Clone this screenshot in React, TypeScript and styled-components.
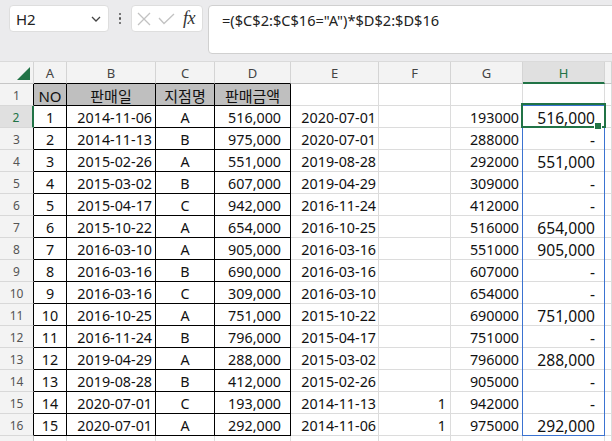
import React from 'react';
import styled, { createGlobalStyle } from 'styled-components';

const Global = createGlobalStyle`
  html, body { margin: 0; padding: 0; background: #ffffff; overflow: hidden; }
  body { font-family: "Noto Sans", "Noto Sans CJK KR", sans-serif; }
  #root { width: 612px; height: 441px; }
`;

const GREEN = '#217346';
const BLUE = '#3b73d1';
const GRID = '#dcdcdc';

const Page = styled.div`
  width: 612px;
  height: 441px;
  overflow: hidden;
  background: #ffffff;
  display: flex;
  flex-direction: column;
`;

const TopBar = styled.div`
  height: 62px;
  flex: 0 0 62px;
  box-sizing: border-box;
  background: #ebebed;
  display: flex;
  align-items: flex-start;
  padding: 5px 0 0 9px;
  border-bottom: 1px solid #dadada;
  & > * {
    flex-shrink: 0;
  }
`;

const NameBox = styled.div`
  width: 100px;
  height: 27px;
  box-sizing: border-box;
  background: #ffffff;
  border: 1px solid #dedede;
  border-radius: 4px;
  display: flex;
  align-items: center;
  justify-content: space-between;
  padding: 0 7px 0 6px;
  font-size: 15px;
  color: #222;
`;

const Dots = styled.div`
  width: 22px;
  height: 27px;
  display: flex;
  flex-direction: column;
  align-items: center;
  justify-content: center;
  gap: 2px;
  & > span {
    width: 2.5px;
    height: 2.5px;
    border-radius: 50%;
    background: #555;
  }
`;

const FxBox = styled.div`
  width: 72px;
  height: 27px;
  box-sizing: border-box;
  background: #ffffff;
  border: 1px solid #dedede;
  border-radius: 4px;
  display: flex;
  align-items: center;
  padding: 0 4px 0 5px;
  gap: 7px;
`;

const Fx = styled.span`
  font-family: "Liberation Serif", serif;
  font-style: italic;
  font-size: 18px;
  color: #333;
  margin-left: 1px;
  letter-spacing: -0.5px;
`;

const FormulaBar = styled.div`
  width: 430px;
  margin-left: 5px;
  height: 49px;
  box-sizing: border-box;
  background: #ffffff;
  border: 1px solid #d0d0d0;
  border-radius: 4px;
  padding: 3px 0 0 13px;
  font-size: 14.6px;
  line-height: 22px;
  color: #222;
  white-space: nowrap;
`;

const SheetArea = styled.div`
  position: relative;
  flex: 1;
  display: grid;
  grid-template-columns: 34px 33px 89px 59px 76px 88px 72px 72px 82px 1fr;
  grid-auto-rows: 22px;
  align-content: start;
`;

const ColHead = styled.div<{ $active?: boolean; $bb?: string }>`
  box-sizing: border-box;
  background: ${(p) => (p.$active ? '#e0e0e0' : '#f3f3f3')};
  border-right: 1px solid #d4d4d4;
  border-bottom: ${(p) => (p.$active ? `2px solid ${GREEN}` : `1px solid ${p.$bb || '#c6c6c6'}`)};
  display: flex;
  align-items: center;
  justify-content: center;
  font-size: 13px;
  color: ${(p) => (p.$active ? GREEN : '#444')};
  padding-top: 1px;
`;

const Corner = styled(ColHead)`
  justify-content: flex-end;
  align-items: flex-end;
  padding: 0 3px 3px 0;
`;

const RowHead = styled.div<{ $active?: boolean; $rb?: string }>`
  box-sizing: border-box;
  background: ${(p) => (p.$active ? '#e0e0e0' : '#f3f3f3')};
  border-bottom: 1px solid #d8d8d8;
  border-right: ${(p) => (p.$active ? `2px solid ${GREEN}` : `1px solid ${p.$rb || '#c6c6c6'}`)};
  display: flex;
  align-items: center;
  justify-content: center;
  font-size: 12px;
  color: ${(p) => (p.$active ? GREEN : '#555')};
  padding-top: 2px;
`;

type Align = 'left' | 'center' | 'right';

const Cell = styled.div<{
  $align?: Align;
  $pr?: number;
  $fill?: string;
  $rb?: string;
  $bb?: string;
  $size?: number;
}>`
  box-sizing: border-box;
  background: ${(p) => p.$fill || '#ffffff'};
  border-right: 1px solid ${(p) => p.$rb || GRID};
  border-bottom: 1px solid ${(p) => p.$bb || GRID};
  display: flex;
  align-items: center;
  justify-content: ${(p) =>
    p.$align === 'center' ? 'center' : p.$align === 'left' ? 'flex-start' : 'flex-end'};
  padding: 2px ${(p) => (p.$pr ?? 3)}px 0 3px;
  font-size: ${(p) => p.$size || 14.3}px;
  color: #111;
  white-space: nowrap;
  overflow: hidden;
`;

const RangeBox = styled.div`
  position: absolute;
  left: 522px;
  top: 43px;
  width: 83px;
  height: 331px;
  box-sizing: border-box;
  border: 1px solid ${BLUE};
  pointer-events: none;
`;

const ActiveBox = styled.div`
  position: absolute;
  left: 521px;
  top: 41px;
  width: 85px;
  height: 25px;
  box-sizing: border-box;
  border: 2px solid ${GREEN};
  pointer-events: none;
`;

const FillHandle = styled.div`
  position: absolute;
  left: 72px;
  top: 18px;
  width: 6px;
  height: 6px;
  background: ${GREEN};
  outline: 1px solid #ffffff;
`;

const cols = ['A', 'B', 'C', 'D', 'E', 'F', 'G', 'H', ''];

const data: [string, string, string, string, string, string, string, string][] = [
  ['1', '2014-11-06', 'A', '516,000', '2020-07-01', '', '193000', '516,000'],
  ['2', '2014-11-13', 'B', '975,000', '2020-07-01', '', '288000', '-'],
  ['3', '2015-02-26', 'A', '551,000', '2019-08-28', '', '292000', '551,000'],
  ['4', '2015-03-02', 'B', '607,000', '2019-04-29', '', '309000', '-'],
  ['5', '2015-04-17', 'C', '942,000', '2016-11-24', '', '412000', '-'],
  ['6', '2015-10-22', 'A', '654,000', '2016-10-25', '', '516000', '654,000'],
  ['7', '2016-03-10', 'A', '905,000', '2016-03-16', '', '551000', '905,000'],
  ['8', '2016-03-16', 'B', '690,000', '2016-03-16', '', '607000', '-'],
  ['9', '2016-03-16', 'C', '309,000', '2016-03-10', '', '654000', '-'],
  ['10', '2016-10-25', 'A', '751,000', '2015-10-22', '', '690000', '751,000'],
  ['11', '2016-11-24', 'B', '796,000', '2015-04-17', '', '751000', '-'],
  ['12', '2019-04-29', 'A', '288,000', '2015-03-02', '', '796000', '288,000'],
  ['13', '2019-08-28', 'B', '412,000', '2015-02-26', '', '905000', '-'],
  ['14', '2020-07-01', 'C', '193,000', '2014-11-13', '1', '942000', '-'],
  ['15', '2020-07-01', 'A', '292,000', '2014-11-06', '1', '975000', '292,000'],
];

const header = ['NO', '판매일', '지점명', '판매금액'];

const colAlign: Align[] = ['center', 'right', 'center', 'right', 'right', 'right', 'right', 'right'];
const colPad = [3, 3, 3, 9, 2, 4, 3, 9];

const Chevron = () => (
  <svg width="10" height="6" viewBox="0 0 10 6">
    <polyline points="1,1 5,5 9,1" fill="none" stroke="#444" strokeWidth="1.3" />
  </svg>
);

const XIcon = () => (
  <svg width="14" height="14" viewBox="0 0 14 14">
    <path d="M1 1 L13 13 M13 1 L1 13" stroke="#c2c2c2" strokeWidth="1.3" fill="none" />
  </svg>
);

const CheckIcon = () => (
  <svg width="17" height="12" viewBox="0 0 17 12">
    <polyline points="1,5 6,10.5 16,1" stroke="#c2c2c2" strokeWidth="1.3" fill="none" />
  </svg>
);

const CornerTriangle = () => (
  <svg width="13" height="13" viewBox="0 0 13 13">
    <polygon points="13,0 13,13 0,13" fill={GREEN} />
  </svg>
);

export default function App() {
  return (
    <Page>
      <Global />
      <TopBar>
        <NameBox>
          <span>H2</span>
          <Chevron />
        </NameBox>
        <Dots>
          <span />
          <span />
          <span />
        </Dots>
        <FxBox>
          <XIcon />
          <CheckIcon />
          <Fx>fx</Fx>
        </FxBox>
        <FormulaBar>=($C$2:$C$16="A")*$D$2:$D$16</FormulaBar>
      </TopBar>
      <SheetArea>
        <Corner>
          <CornerTriangle />
        </Corner>
        {cols.map((c, i) => (
          <ColHead key={'h' + i} $active={c === 'H'} $bb={i < 4 ? '#000' : undefined}>
            {c}
          </ColHead>
        ))}

        <RowHead $rb="#000">1</RowHead>
        {header.map((h, i) => (
          <Cell key={'r1' + i} $align="center" $fill="#bfbfbf" $rb="#000" $bb="#000" $size={15}>
            {h}
          </Cell>
        ))}
        {[0, 1, 2, 3, 4].map((i) => (
          <Cell key={'r1e' + i} />
        ))}

        {data.map((row, r) => (
          <React.Fragment key={'row' + r}>
            <RowHead $active={r === 0} $rb="#000">
              {r + 2}
            </RowHead>
            {row.map((v, c) => (
              <Cell
                key={c}
                $align={colAlign[c]}
                $pr={colPad[c]}
                $rb={c < 4 ? '#000' : undefined}
                $bb={c < 4 ? '#000' : undefined}
                $size={c === 7 ? 15.6 : undefined}
              >
                {v}
              </Cell>
            ))}
            <Cell />
          </React.Fragment>
        ))}

        <RowHead />
        {[0, 1, 2, 3, 4, 5, 6, 7, 8].map((i) => (
          <Cell key={'r17' + i} />
        ))}

        <RangeBox />
        <ActiveBox>
          <FillHandle />
        </ActiveBox>
      </SheetArea>
    </Page>
  );
}
